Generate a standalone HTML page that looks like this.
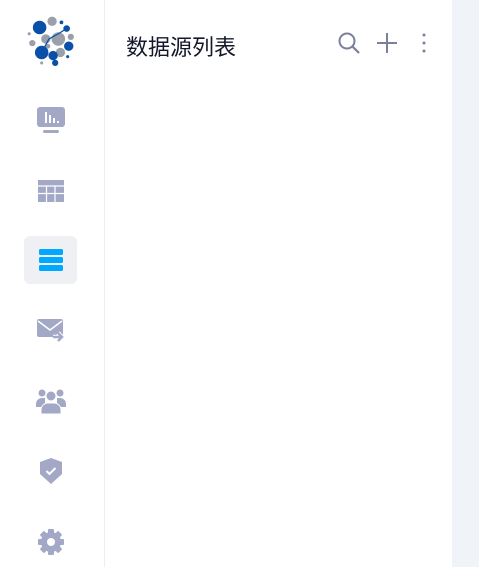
<!DOCTYPE html>
<html><head><meta charset="utf-8"><style>
*{margin:0;padding:0;box-sizing:border-box}
body{width:479px;height:567px;background:#fff;position:relative;overflow:hidden;font-family:"Liberation Sans","Noto Sans CJK SC",sans-serif}
.side{position:absolute;left:0;top:0;width:105px;height:567px;border-right:1px solid #edeef2}
.right{position:absolute;left:452px;top:0;width:27px;height:567px;background:#f0f3f8}
.ic{position:absolute;left:24px;width:53px;height:48px;display:flex;align-items:center;justify-content:center}
.act{background:#eef0f4;border-radius:6px}
h1{position:absolute;left:126px;top:30px;font-size:22px;font-weight:400;color:#14182a;font-family:"Liberation Sans","Noto Sans CJK SC",sans-serif}
</style></head><body>
<div class="side">
<svg style="position:absolute;left:24px;top:14px" width="52" height="52" viewBox="0 0 50 50">
<circle cx="27" cy="7" r="4.5" fill="#9aa0aa"/><circle cx="15" cy="13" r="6.5" fill="#0a4fa8"/>
<circle cx="36" cy="8" r="1.8" fill="#0a4fa8"/><circle cx="41" cy="14" r="3.2" fill="#0a4fa8"/>
<circle cx="45" cy="22" r="3" fill="#9aa0aa"/><circle cx="33" cy="24" r="6.5" fill="#9aa0aa"/>
<circle cx="21" cy="24" r="4.5" fill="#9aa0aa"/><circle cx="5" cy="19" r="1.5" fill="#9aa0aa"/>
<circle cx="8" cy="28" r="3" fill="#9aa0aa"/><circle cx="43" cy="31" r="4.5" fill="#0a4fa8"/>
<circle cx="23" cy="31" r="2.3" fill="#9aa0aa"/><circle cx="35" cy="37" r="4.5" fill="#9aa0aa"/>
<circle cx="17" cy="37" r="6.5" fill="#0a4fa8"/><circle cx="28" cy="40" r="4.5" fill="#0a4fa8"/>
<circle cx="42" cy="41" r="1.5" fill="#0a4fa8"/><circle cx="17" cy="47" r="1.5" fill="#9aa0aa"/>
<circle cx="30" cy="47" r="3" fill="#0a4fa8"/>
<path d="M17 37 L24 24 L33 19 L41 14" stroke="#0a4fa8" stroke-width="1.2" fill="none"/>
</svg>
<div class="ic" style="top:96px"><svg width="30" height="30" viewBox="0 0 30 30"><rect x="1" y="2" width="28" height="20" rx="3" fill="#a2a8c6"/><rect x="7" y="25" width="16" height="3" rx="1.5" fill="#a2a8c6"/><rect x="9" y="7" width="2" height="11" fill="#fff"/><rect x="13" y="10" width="2" height="8" fill="#fff"/><rect x="17" y="13" width="2" height="5" fill="#fff"/><rect x="21" y="16" width="2" height="2" fill="#fff"/></svg></div>
<div class="ic" style="top:167px"><svg width="26" height="22" viewBox="0 0 26 22"><rect x="0" y="0" width="26" height="22" fill="#a2a8c6"/><path d="M0 6H26M0 13.5H26M8.5 6V22M17 6V22" stroke="#fff" stroke-width="1.2"/></svg></div>
<div class="ic act" style="top:236px"><svg width="26" height="26" viewBox="0 0 26 26"><rect x="1" y="2" width="24" height="6" rx="1.5" fill="#00a8ff"/><rect x="1" y="10" width="24" height="6" rx="1.5" fill="#00a8ff"/><rect x="1" y="18" width="24" height="6" rx="1.5" fill="#00a8ff"/></svg></div>
<div class="ic" style="top:306px"><svg width="30" height="26" viewBox="0 0 30 26"><rect x="1" y="2" width="26" height="18" rx="2" fill="#a2a8c6"/><path d="M2 4 L14 13 L26 4" stroke="#fff" stroke-width="1.5" fill="none"/><path d="M17 20H25M22 16l4 4-4 4" stroke="#fff" stroke-width="4.5" fill="none"/><path d="M17 20H25M22 16l4 4-4 4" stroke="#a2a8c6" stroke-width="2.5" fill="none"/></svg></div>
<div class="ic" style="top:377px"><svg width="30" height="28" viewBox="0 0 30 28"><circle cx="6" cy="6" r="3.5" fill="#a2a8c6"/><circle cx="24" cy="6" r="3.5" fill="#a2a8c6"/><path d="M0 17a6 6 0 0 1 6-6h3v9H0z" fill="#a2a8c6"/><path d="M30 17a6 6 0 0 0-6-6h-3v9h9z" fill="#a2a8c6"/><circle cx="15" cy="9" r="5" fill="#a2a8c6" stroke="#fff" stroke-width="1"/><path d="M5 27v-4a7 7 0 0 1 7-7h6a7 7 0 0 1 7 7v4z" fill="#a2a8c6" stroke="#fff" stroke-width="1"/></svg></div>
<div class="ic" style="top:447px"><svg width="26" height="28" viewBox="0 0 26 28"><path d="M13 1 L24 5 V17 L13 27 L2 17 V5 Z" fill="#a2a8c6"/><path d="M8.5 14l3 3 6-6" stroke="#fff" stroke-width="2" fill="none"/></svg></div>
<div class="ic" style="top:518px"><svg width="28" height="28" viewBox="0 0 28 28"><g fill="#a2a8c6"><circle cx="14" cy="14" r="10"/><g><rect x="11" y="1" width="6" height="6" rx="1"/><rect x="11" y="21" width="6" height="6" rx="1"/><rect x="1" y="11" width="6" height="6" rx="1"/><rect x="21" y="11" width="6" height="6" rx="1"/></g><g transform="rotate(45 14 14)"><rect x="11" y="1" width="6" height="6" rx="1"/><rect x="11" y="21" width="6" height="6" rx="1"/><rect x="1" y="11" width="6" height="6" rx="1"/><rect x="21" y="11" width="6" height="6" rx="1"/></g></g><circle cx="14" cy="14" r="4" fill="#fff"/></svg></div>
</div>
<h1>数据源列表</h1>
<svg style="position:absolute;left:337px;top:31px" width="26" height="26" viewBox="0 0 26 26"><circle cx="10" cy="10" r="7.5" stroke="#7a7f9a" stroke-width="2" fill="none"/><path d="M15.5 15.5L22 22" stroke="#7a7f9a" stroke-width="2.2"/></svg>
<svg style="position:absolute;left:376px;top:32px" width="22" height="22" viewBox="0 0 22 22"><path d="M11 1V21M1 11H21" stroke="#7a7f9a" stroke-width="2"/></svg>
<svg style="position:absolute;left:420px;top:32px" width="8" height="22" viewBox="0 0 8 22"><circle cx="4" cy="3" r="1.5" fill="#7a7f9a"/><circle cx="4" cy="11" r="1.5" fill="#7a7f9a"/><circle cx="4" cy="19" r="1.5" fill="#7a7f9a"/></svg>
<div class="right"></div>
</body></html>
